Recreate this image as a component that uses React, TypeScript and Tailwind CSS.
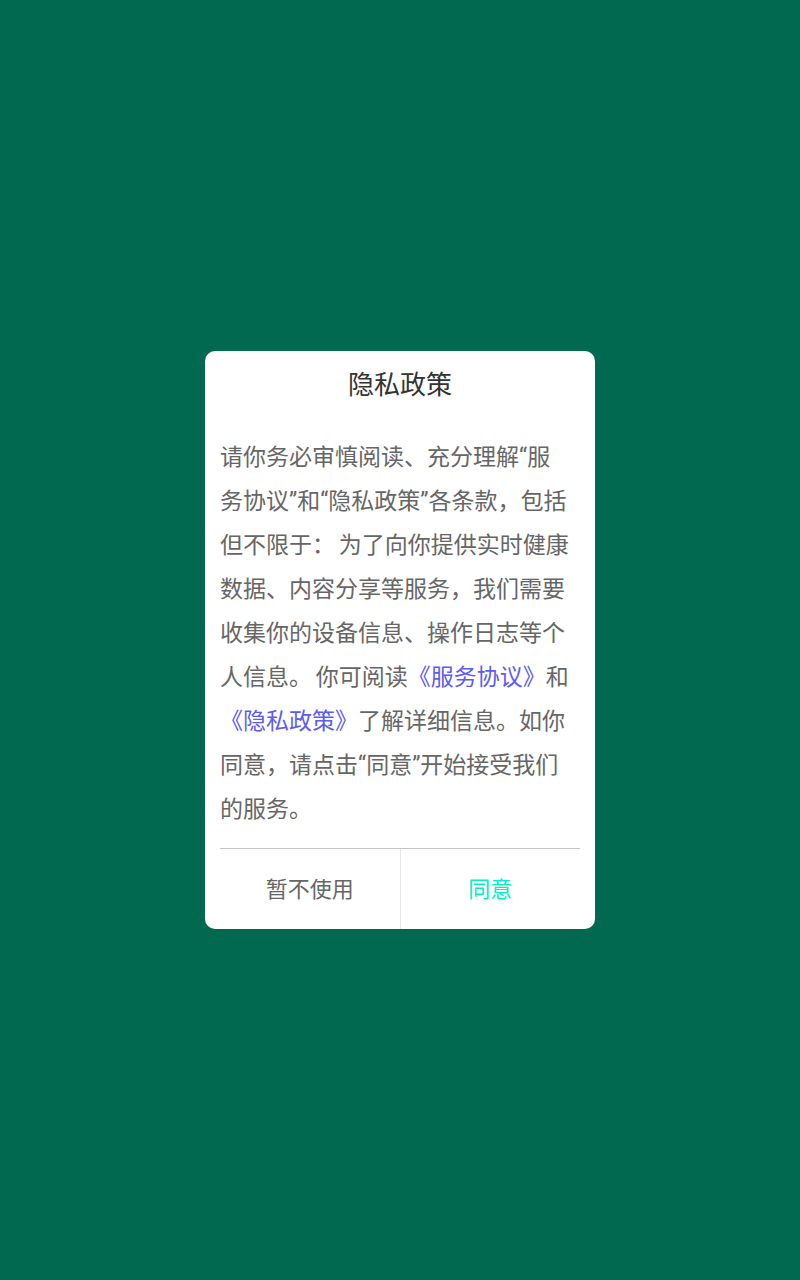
import React from 'react';

export default function App() {
  return (
    <div className="w-[800px] h-[1280px] bg-[#006950] flex items-center justify-center font-['Roboto','Noto_Sans_CJK_SC',sans-serif]">
      <div className="w-[390px] bg-white rounded-[10px] px-[15px]">
        {/* Title */}
        <div className="h-[68px] flex items-center justify-center text-[26px] text-[#333]">隐私政策</div>

        {/* Body */}
        <p className="w-[350px] mt-[17px] text-[23px] leading-[44px] text-[#666] break-all [word-spacing:-2px]">
          请你务必审慎阅读、充分理解“服务协议”和“隐私政策”各条款，包括但不限于： 为了向你提供实时健康数据、内容分享等服务，我们需要收集你的设备信息、操作日志等个人信息。 你可阅读
          <span className="text-[#5b5bf5]">《服务协议》</span>和
          <span className="text-[#5b5bf5]">《隐私政策》</span>了解详细信息。如你同意，请点击“同意”开始接受我们的服务。
        </p>

        {/* Actions */}
        <div className="mt-[16px] border-t border-[#c4c4c4] flex h-[81px]">
          <button className="flex-1 text-[22px] text-[#666] border-r border-[#e8e8e8]">暂不使用</button>
          <button className="flex-1 text-[22px] text-[#00f0c8]">同意</button>
        </div>
      </div>
    </div>
  );
}
